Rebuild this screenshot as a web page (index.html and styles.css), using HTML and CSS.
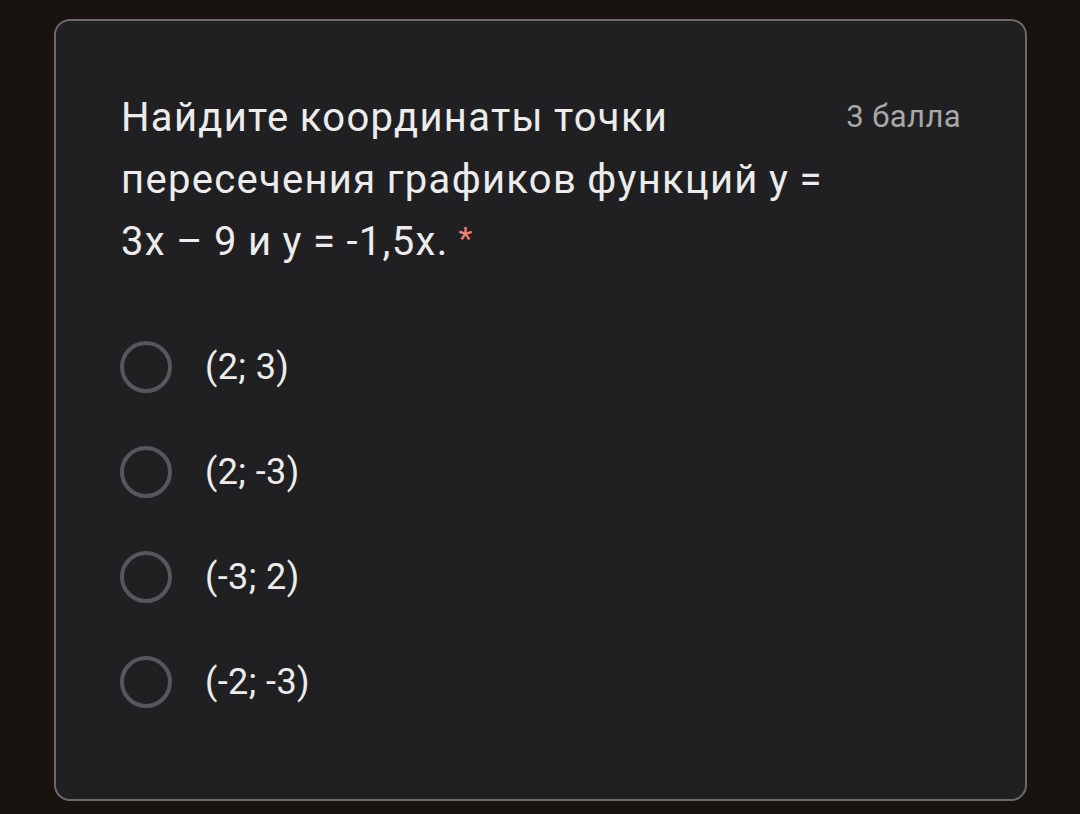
FILE: index.html
```html
<!DOCTYPE html>
<html lang="ru">
<head>
<meta charset="utf-8">
<link rel="stylesheet" href="styles.css">
</head>
<body>
<div class="card">
  <div class="header">
    <div class="title">Найдите координаты точки пересечения графиков функций у = 3х – 9 и у = -1,5х.<span class="req">*</span></div>
    <div class="points">3 балла</div>
  </div>
  <div class="options">
    <div class="option"><span class="radio"></span><span class="label">(2; 3)</span></div>
    <div class="option"><span class="radio"></span><span class="label">(2; -3)</span></div>
    <div class="option"><span class="radio"></span><span class="label">(-3; 2)</span></div>
    <div class="option"><span class="radio"></span><span class="label">(-2; -3)</span></div>
  </div>
</div>
</body>
</html>
```

FILE: styles.css
```css
html, body {
  margin: 0;
  padding: 0;
  background: #19130f;
}
body {
  width: 1080px;
  height: 814px;
  padding: 19px 53px 0 54px;
  box-sizing: border-box;
  font-family: Roboto, "Noto Sans", sans-serif;
}
.card {
  height: 782px;
  box-sizing: border-box;
  border: 2px solid #6a6a6b;
  border-radius: 16px;
  background: #202022;
  padding: 66px 64px 0 65px;
}
.header {
  display: flex;
  align-items: flex-start;
}
.title {
  width: 724px;
  font-size: 40px;
  letter-spacing: 1.3px;
  word-spacing: -1px;
  line-height: 62px;
  color: #ececec;
}
.req {
  display: inline-block;
  color: #f07f78;
  font-size: 32px;
  line-height: 32px;
  vertical-align: 6px;
  margin-left: 10px;
}
.points {
  margin-left: auto;
  margin-top: 12px;
  font-size: 31px;
  letter-spacing: 0.4px;
  line-height: 36px;
  color: #a8a8a9;
}
.options {
  margin-top: 41px;
  display: flex;
  flex-direction: column;
}
.option {
  height: 105px;
  display: flex;
  align-items: center;
}
.radio {
  width: 52px;
  height: 52px;
  box-sizing: border-box;
  border: 4.5px solid #55575a;
  border-radius: 50%;
  margin-left: -1px;
}
.label {
  margin-left: 33px;
  font-size: 36px;
  letter-spacing: 0.4px;
  color: #ececec;
}
```
